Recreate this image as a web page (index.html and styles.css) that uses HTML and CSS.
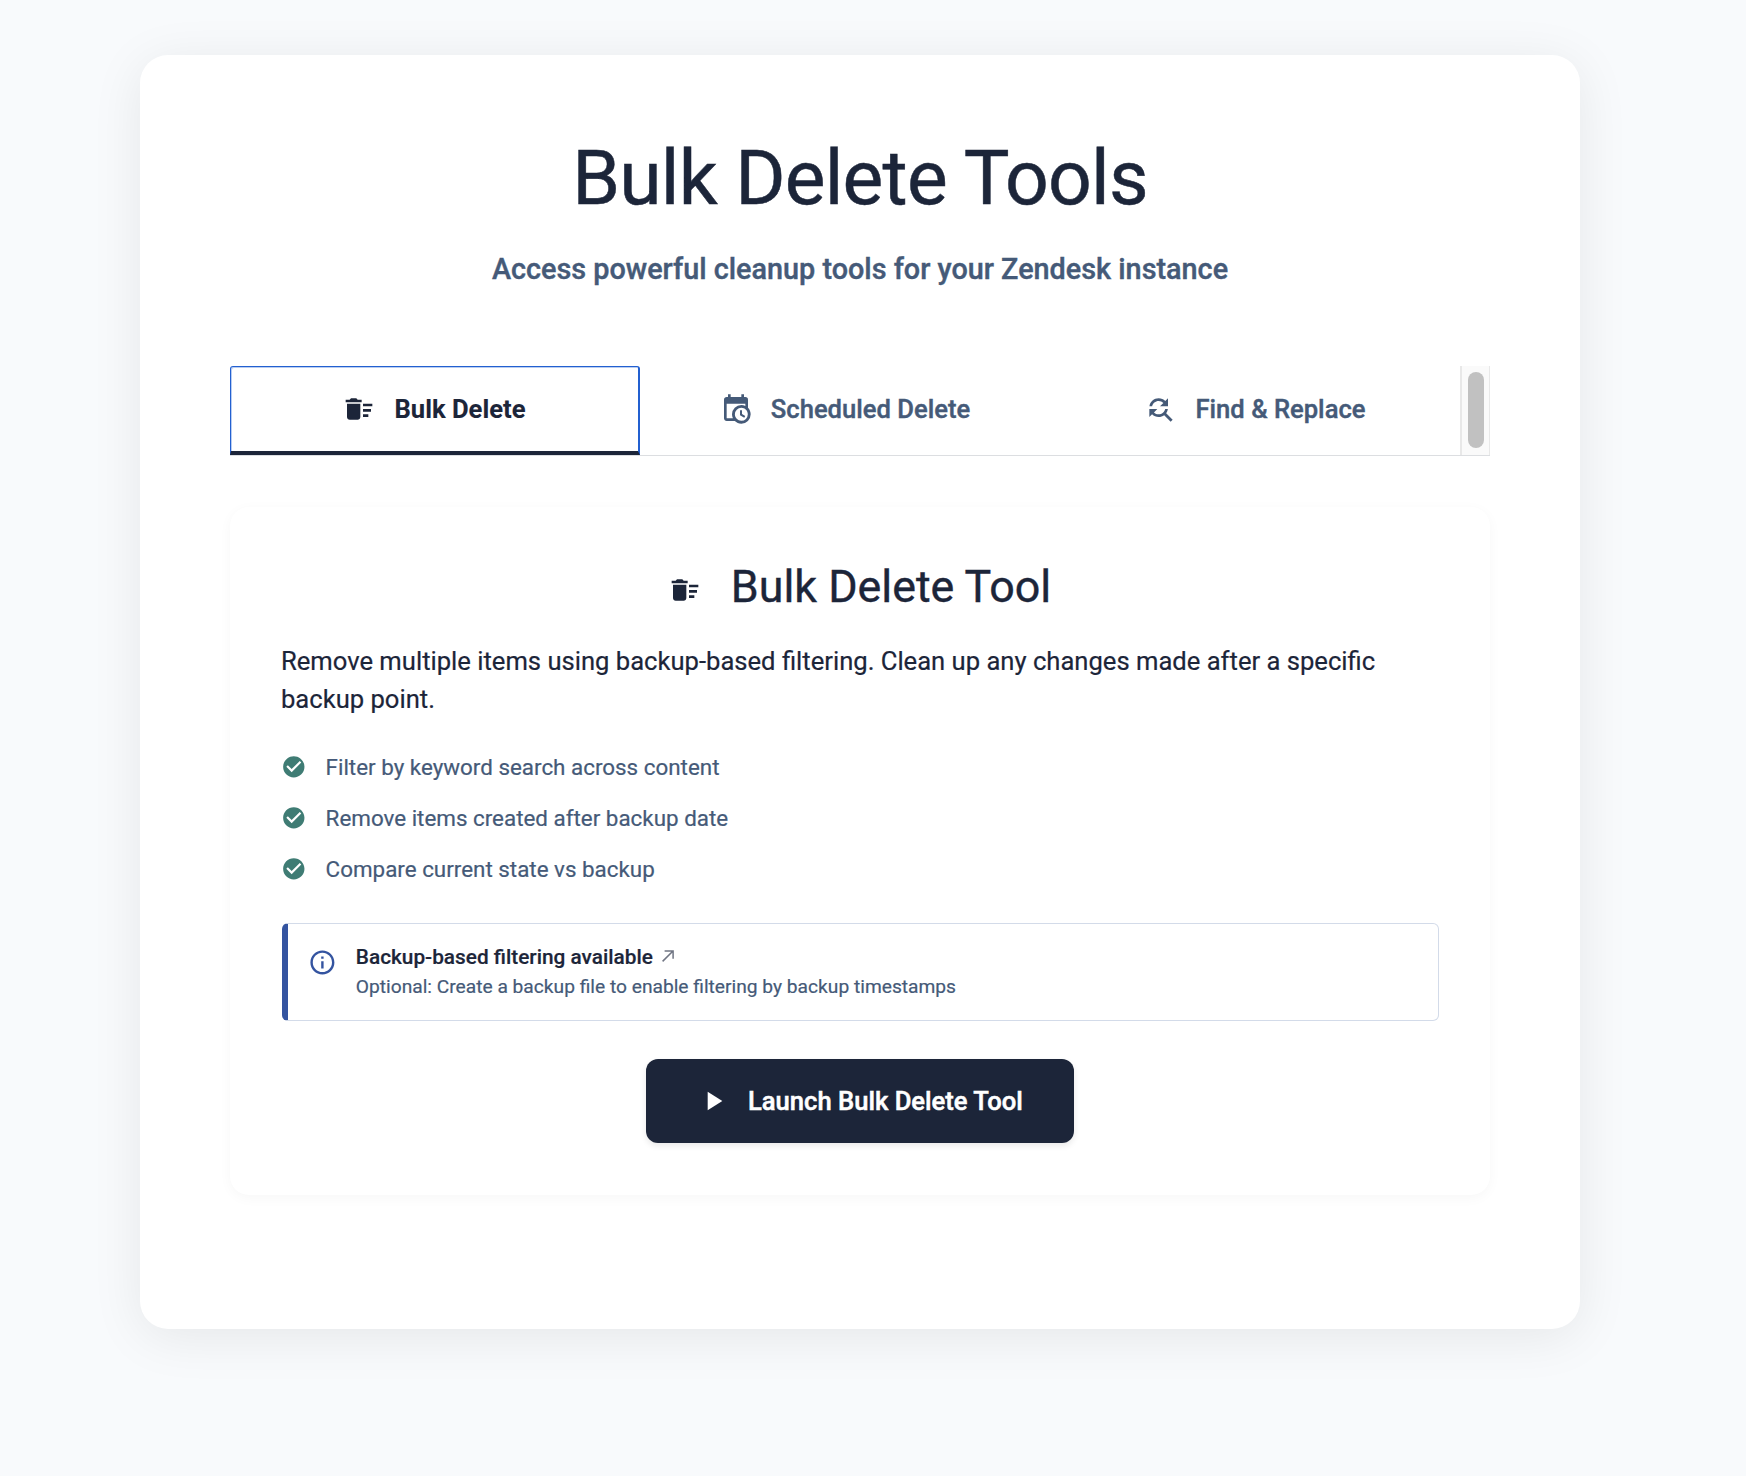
FILE: index.html
```html
<!DOCTYPE html>
<html lang="en">
<head>
<meta charset="utf-8">
<title>Bulk Delete Tools</title>
<link rel="stylesheet" href="styles.css">
</head>
<body>
<main class="card">
  <h1 class="title">Bulk Delete Tools</h1>
  <p class="subtitle"><span>Access powerful cleanup tools for your Zendesk instance</span></p>

  <div class="tabs" role="tablist">
    <button class="tab tab--active" role="tab">
      <svg class="icon" viewBox="0 0 24 24"><path d="M15 16h4v2h-4zm0-8h7v2h-7zm0 4h6v2h-6zM3 18c0 1.1.9 2 2 2h6c1.1 0 2-.9 2-2V8H3v10zM14 5h-3l-1-1H6L5 5H2v2h12V5z"/></svg>
      <span>Bulk Delete</span>
    </button>
    <button class="tab" role="tab">
      <svg class="icon" viewBox="0 0 24 24"><path d="M15,13H16.5V15.82L18.94,17.23L18.19,18.53L15,16.69V13M19,8H5V19H9.67C9.24,18.09 9,17.07 9,16A7,7 0 0,1 16,9C17.07,9 18.09,9.24 19,9.67V8M5,21C3.89,21 3,20.1 3,19V5C3,3.89 3.89,3 5,3H6V1H8V3H16V1H18V3H19A2,2 0 0,1 21,5V11.1C22.24,12.36 23,14.09 23,16A7,7 0 0,1 16,23C14.09,23 12.36,22.24 11.1,21H5M16,11.15A4.85,4.85 0 0,0 11.15,16C11.15,18.68 13.32,20.85 16,20.85A4.85,4.85 0 0,0 20.85,16C20.85,13.32 18.68,11.15 16,11.15Z"/></svg>
      <span>Scheduled Delete</span>
    </button>
    <button class="tab" role="tab">
      <svg class="icon" viewBox="0 0 24 24"><path d="M11 6c1.38 0 2.63.56 3.54 1.46L12 10h6V4l-2.05 2.05C14.68 4.78 12.93 4 11 4c-3.53 0-6.43 2.61-6.92 6H6.1c.46-2.28 2.48-4 4.9-4zm5.64 9.14c.66-.9 1.12-1.97 1.28-3.14H15.9c-.46 2.28-2.48 4-4.9 4-1.38 0-2.63-.56-3.54-1.46L10 12H4v6l2.05-2.05C7.32 17.22 9.07 18 11 18c1.55 0 2.98-.51 4.14-1.36L20 21.49 21.49 20l-4.85-4.86z"/></svg>
      <span>Find &amp; Replace</span>
    </button>
    <div class="scrollbar"><div class="scrollbar-thumb"></div></div>
  </div>

  <section class="panel">
    <h2 class="panel-title">
      <svg class="icon" viewBox="0 0 24 24"><path d="M15 16h4v2h-4zm0-8h7v2h-7zm0 4h6v2h-6zM3 18c0 1.1.9 2 2 2h6c1.1 0 2-.9 2-2V8H3v10zM14 5h-3l-1-1H6L5 5H2v2h12V5z"/></svg>
      <span>Bulk Delete Tool</span>
    </h2>
    <p class="description"><span>Remove multiple items using backup-based filtering. Clean up any changes made after a specific backup point.</span></p>
    <ul class="features">
      <li class="feature"><svg class="check" viewBox="0 0 24 24"><path d="M12 2C6.48 2 2 6.48 2 12s4.480 10 10 10 10-4.480 10-10S17.520 2 12 2zm-2 15l-5-5 1.410-1.410L10 14.170l7.590-7.590L19 8l-9 9z"/></svg><span>Filter by keyword search across content</span></li>
      <li class="feature"><svg class="check" viewBox="0 0 24 24"><path d="M12 2C6.48 2 2 6.48 2 12s4.480 10 10 10 10-4.480 10-10S17.520 2 12 2zm-2 15l-5-5 1.410-1.410L10 14.170l7.590-7.590L19 8l-9 9z"/></svg><span>Remove items created after backup date</span></li>
      <li class="feature"><svg class="check" viewBox="0 0 24 24"><path d="M12 2C6.48 2 2 6.48 2 12s4.480 10 10 10 10-4.480 10-10S17.520 2 12 2zm-2 15l-5-5 1.410-1.410L10 14.170l7.590-7.590L19 8l-9 9z"/></svg><span>Compare current state vs backup</span></li>
    </ul>
    <div class="notice">
      <svg class="notice-icon" viewBox="0 0 24 24"><path d="M11 7h2v2h-2zm0 4h2v6h-2zm1-9C6.480 2 2 6.480 2 12s4.480 10 10 10 10-4.480 10-10S17.520 2 12 2zm0 18c-4.410 0-8-3.590-8-8s3.590-8 8-8 8 3.590 8 8-3.590 8-8 8z"/></svg>
      <div class="notice-body">
        <div class="notice-title"><span>Backup-based filtering available</span><svg class="arrow" viewBox="0 0 12 12"><path d="M.6 11.400L11 1M2.600.9H11.100V8.800"/></svg></div>
        <div class="notice-text"><span>Optional: Create a backup file to enable filtering by backup timestamps</span></div>
      </div>
    </div>
    <button class="launch">
      <svg class="icon" viewBox="0 0 24 24"><path d="M8 5v14l11-7z"/></svg>
      <span>Launch Bulk Delete Tool</span>
    </button>
  </section>
</main>
</body>
</html>
```

FILE: styles.css
```css
* { box-sizing: border-box; }

body {
  margin: 0;
  min-height: 1476px;
  padding: 55px 0 0 140px;
  background: #f8fafc;
  color: #1c2539;
  font-family: Roboto, sans-serif;
  -webkit-text-stroke: .2px currentColor;
}

h1, h2, p, ul { margin: 0; padding: 0; font-weight: 400; }

button { border: 0; margin: 0; font-family: inherit; background: none; }

.card {
  width: 1440px;
  height: 1274px;
  padding: 77px 90px 0;
  border-radius: 28px;
  background: #fff;
  box-shadow: 0 8px 52px rgba(0, 0, 0, .08);
}

.title {
  font-size: 76.8px;
  line-height: 92px;
  letter-spacing: -.768px;
  text-align: center;
  -webkit-text-stroke-width: .5px;
}

.subtitle {
  margin-top: 25px;
  color: #455a78;
  font-size: 28.8px;
  font-weight: 500;
  line-height: 40px;
  text-align: center;
  -webkit-text-stroke-width: .4px;
}

.tabs {
  display: flex;
  height: 90px;
  margin-top: 77px;
  border-bottom: 1px solid #dcdee1;
}

.tab {
  display: flex;
  flex: 0 0 410px;
  align-items: center;
  justify-content: center;
  gap: 19px;
  padding: 0 0 4px;
  color: #455a78;
  font-size: 25.6px;
  font-weight: 500;
  -webkit-text-stroke: .4px currentColor;
}

.tab--active {
  border: 1px solid #2360d0;
  border-right-width: 2px;
  border-bottom: 4px solid #1c2539;
  border-radius: 3px 3px 0 0;
  box-shadow: inset 1px 1px 0 #b9cdf1;
  padding: 0;
  color: #1c2539;
  font-weight: 700;
  -webkit-text-stroke-width: .1px;
}

.icon { flex: none; width: 32px; height: 32px; fill: currentColor; }

.scrollbar {
  width: 30px;
  padding: 6px 6px;
  border: solid #e8e8e8;
  border-width: 0 1px 0 2px;
  background: #fafafa;
}

.scrollbar-thumb { width: 16px; height: 76px; border-radius: 8px; background: #c1c1c1; }

.panel {
  height: 688px;
  margin-top: 51px;
  padding: 51px 51px 0;
  border-radius: 19px;
  background: #fff;
  box-shadow: 0 3px 13px rgba(0, 0, 0, .035);
}

.panel-title {
  display: flex;
  justify-content: center;
  align-items: center;
  gap: 30px;
  height: 56px;
  font-size: 44.8px;
  -webkit-text-stroke-width: .4px;
}

.panel-title .icon { margin-top: 8px; }

.description {
  margin-top: 28px;
  font-size: 25.6px;
  line-height: 38.400px;
}

.features { margin-top: 22.500px; list-style: none; }

.feature {
  display: flex;
  align-items: center;
  gap: 19px;
  height: 51px;
  color: #455a78;
  font-size: 22.400px;
}

.check { width: 25.600px; height: 25.600px; fill: #3f7c74; }

.notice {
  display: flex;
  gap: 19px;
  height: 98px;
  margin: 28.500px 0 0 1px;
  padding: 19px 20px;
  border: 1px solid #d3dbe9;
  border-left: 6px solid #3454a0;
  border-radius: 6px;
}

.notice-icon { width: 28.800px; height: 28.800px; margin-top: 5px; fill: #3454a0; }

.notice-title {
  display: flex;
  gap: 9px;
  font-size: 20.800px;
  font-weight: 500;
  line-height: 29px;
}

.arrow { width: 12px; height: 12px; margin-top: 7px; fill: none; stroke: #707583; stroke-width: 1.500; }

.notice-text { color: #455a78; font-size: 19.200px; line-height: 30px; }

.launch {
  display: flex;
  align-items: center;
  gap: 19.500px;
  width: 428px;
  height: 84px;
  margin: 38px auto 0;
  padding: 0 50.500px;
  border-radius: 12px;
  background: #1c2539;
  box-shadow: 0 3px 6px rgba(0, 0, 0, .09);
  color: #fff;
  font-size: 25.600px;
  font-weight: 500;
  white-space: nowrap;
  -webkit-text-stroke: .5px currentColor;
}
```
